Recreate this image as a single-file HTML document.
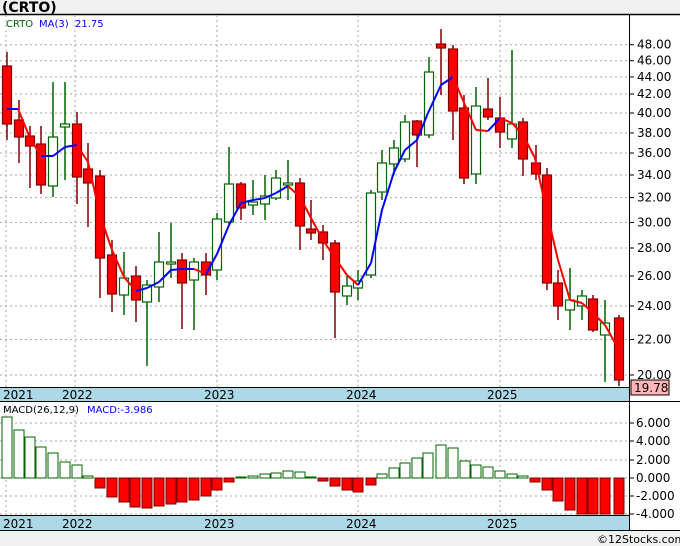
<!DOCTYPE html>
<html><head><meta charset="utf-8"><style>
html,body{margin:0;padding:0;width:680px;height:546px;overflow:hidden;background:#f0f0f0;font-family:"Liberation Sans","DejaVu Sans",sans-serif}
svg{display:block}
</style></head><body>
<svg id="s" width="680" height="546" xmlns="http://www.w3.org/2000/svg" font-family="DejaVu Sans, Liberation Sans, sans-serif">
<rect x="0" y="0" width="680" height="546" fill="#f0f0f0"/>
<text x="2" y="12" font-size="14" font-weight="bold" fill="#000">(CRTO)</text>
<rect x="0" y="14" width="680" height="516" fill="#fff"/>
<line x1="0" y1="14.5" x2="680" y2="14.5" stroke="#000" stroke-width="1.5"/>
<g id="grid"></g>
<rect x="0" y="387" width="629" height="14" fill="#add8e6"/>
<rect x="0" y="516" width="629" height="14" fill="#add8e6"/>
<line x1="0" y1="387.5" x2="629" y2="387.5" stroke="#000"/>
<line x1="0" y1="401.5" x2="680" y2="401.5" stroke="#000"/>
<line x1="0" y1="515.5" x2="629" y2="515.5" stroke="#000"/>
<line x1="0" y1="530.5" x2="680" y2="530.5" stroke="#000"/>
<line x1="629.5" y1="14" x2="629.5" y2="530" stroke="#000"/>
<g font-size="12" fill="#000">
<text x="3" y="399">2021</text><text x="62" y="399">2022</text><text x="204" y="399">2023</text><text x="346" y="399">2024</text><text x="487" y="399">2025</text>
<text x="3" y="528">2021</text><text x="62" y="528">2022</text><text x="204" y="528">2023</text><text x="346" y="528">2024</text><text x="487" y="528">2025</text>
</g>
<g id="c"></g>
<g id="ax" font-size="12" fill="#000"></g>
<rect x="631" y="380" width="38" height="15" fill="#ffb6b6" stroke="#000"/>
<text x="634" y="392" font-size="12">19.78</text>
<text x="6" y="27" font-size="10" fill="#006400">CRTO</text>
<text x="39" y="27" font-size="10" fill="#0000ff">MA(3)</text>
<text x="75" y="27" font-size="10" fill="#0000ff">21.75</text>
<text x="3" y="413" font-size="10" fill="#000">MACD(26,12,9)</text>
<text x="87" y="413" font-size="10" fill="#0000ff">MACD:-3.986</text>
<text x="597" y="543" font-size="11" fill="#000">©12Stocks.com</text>
</svg>
<script>
var NS="http://www.w3.org/2000/svg";
function el(p,t,a){var e=document.createElementNS(NS,t);for(var k in a)e.setAttribute(k,a[k]);p.appendChild(e);return e;}
var g=document.getElementById('grid'),c=document.getElementById('c'),ax=document.getElementById('ax');
var py=[[48,44.7],[46,60.7],[44,77],[42,94],[40,113],[38,133],[36,153],[34,175],[32,197.6],[30,222.5],[28,248],[26,276],[24,306],[22,339.5],[20,375]];
py.forEach(function(p){el(g,'line',{x1:0,x2:629,y1:p[1],y2:p[1],stroke:'#aaa','stroke-dasharray':'2,3'});el(ax,'line',{x1:629,x2:634,y1:p[1],y2:p[1],stroke:'#000'});var t=el(ax,'text',{x:637,y:p[1]+4});t.textContent=p[0].toFixed(2);});
var my=[[6,423],[4,441],[2,460],[0,478],[-2,496],[-4,514]];
my.forEach(function(p){el(g,'line',{x1:0,x2:629,y1:p[1],y2:p[1],stroke:'#aaa','stroke-dasharray':'2,3'});el(ax,'line',{x1:629,x2:634,y1:p[1],y2:p[1],stroke:'#000'});var t=el(ax,'text',{x:636,y:p[1]+4});t.textContent=(p[0]<0?'-':'')+Math.abs(p[0]).toFixed(3);});
[6,75,217,358,500].forEach(function(x){el(g,'line',{x1:x,x2:x,y1:15,y2:530,stroke:'#aaa','stroke-dasharray':'2,3'});});
var C=[[7,0,66,124,52,140],[19,0,120,137,100,163],[30,0,136,146,126,188],[41,0,144,185,126,194],[53,1,137,186,82,197],[65,1,124,127,82,180],[77,0,124,177,112,204],[88,0,169,183,143,227],[100,0,176,258,170,298],[112,0,255,294,240,312],[124,1,278,295,252,315],[136,0,276,300,266,322],[147,1,285,302,280,366],[159,1,262,287,232,302],[171,1,262,264,223,278],[182,0,260,283,253,329],[194,1,262,280,258,330],[206,0,262,275,253,295],[217,1,219,270,213,280],[229,1,184,222,147,225],[241,0,184,208,182,220],[253,1,202,205,180,215],[265,1,196,204,175,220],[276,1,178,198,170,200],[288,1,183,185,160,200],[300,0,183,226,178,250],[311,0,229,233,200,240],[323,0,232,243,225,260],[335,0,243,292,240,338],[347,1,286,296,276,305],[358,1,281,288,270,300],[371,1,193,275,190,278],[382,1,163,192,150,200],[394,1,148,164,140,175],[405,1,122,159,115,162],[417,0,121,135,120,167],[429,1,72,135,57,138],[441,0,44,48,29,95],[453,0,49,111,45,140],[464,0,108,178,95,184],[476,1,106,174,87,184],[488,0,109,117,78,120],[500,0,118,132,97,148],[512,1,124,139,50,148],[523,0,122,159,118,176],[536,0,163,174,145,180],[547,0,175,283,168,290],[558,0,283,306,270,320],[570,1,300,310,268,330],[582,1,296,306,290,320],[593,0,299,330,295,332],[605,1,323,335,300,382],[619,0,318,380,315,386]];
C.forEach(function(d){var col=d[1]?'#006400':'#800000';el(c,'line',{x1:d[0],x2:d[0],y1:d[4],y2:d[5],stroke:col,'stroke-width':1.5});el(c,'rect',{x:d[0]-4.5,y:d[2],width:9,height:Math.max(2,d[3]-d[2]),fill:d[1]?'#fff':'#f00',stroke:col,'stroke-width':1.2});});
var M=[[7,109],[18,109],[30,138],[41,156],[53,156],[65,147],[77,145],[88,162],[100,215],[112,250],[124,277],[136,291],[147,288],[159,282],[171,270],[182,269],[194,269],[206,274],[217,254],[229,225],[241,203],[253,200],[265,198],[276,193],[288,186],[300,197],[311,218],[323,240],[335,258],[347,275],[358,285],[371,263],[382,210],[394,172],[405,150],[417,140],[428,113],[441,85],[453,77],[465,105],[476,130],[488,131],[500,118],[512,123],[523,135],[535,158],[547,213],[558,260],[570,300],[582,303],[593,313],[605,325],[619,350]];
for(var i=1;i<M.length;i++){el(c,'line',{x1:M[i-1][0],y1:M[i-1][1],x2:M[i][0],y2:M[i][1],stroke:M[i][1]<=M[i-1][1]?'#0000ff':'#ff0000','stroke-width':2});}
var H=[[7,417],[19,430],[30,437],[41,447],[53,453],[65,462],[77,465],[88,476],[100,488],[112,497],[124,502],[135,507],[147,508],[159,506],[171,504],[182,502],[194,500],[206,496],[217,490],[229,482],[241,477],[253,476],[265,474],[276,473],[288,471],[300,472],[311,477],[323,481],[335,486],[347,490],[358,492],[371,485],[382,474],[394,468],[405,463],[417,458],[428,453],[441,445],[453,448],[465,461],[476,465],[488,467],[500,471],[512,474],[523,476],[535,482],[547,490],[558,501],[570,510],[582,514],[593,514],[605,514],[619,514]];
H.forEach(function(h){var pos=h[1]<478;var t=Math.min(h[1],478),b=Math.max(h[1],478);el(c,'rect',{x:h[0]-5,y:t,width:10,height:Math.max(1,b-t),fill:pos?'#fff':'#f00',stroke:pos?'#006400':'#800000','stroke-width':1});});
</script>
</body></html>
